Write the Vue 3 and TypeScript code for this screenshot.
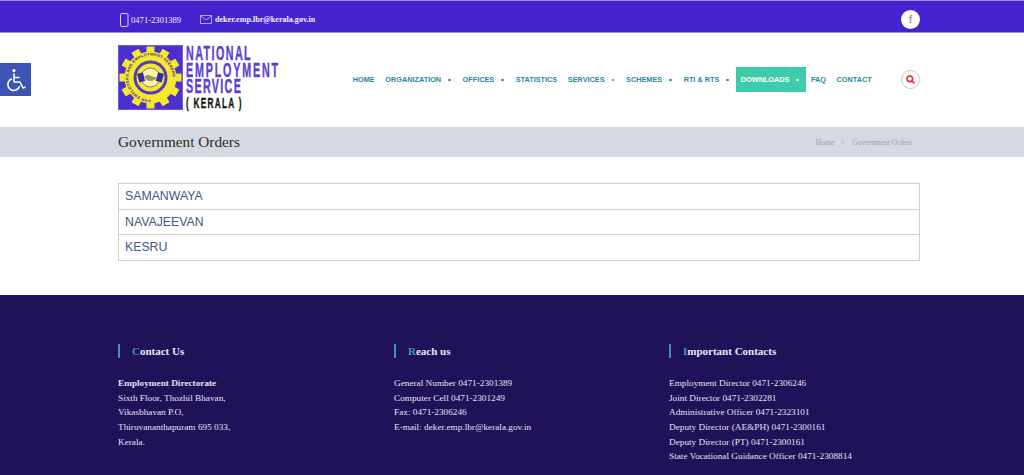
<script setup lang="ts">
interface NavItem {
  label: string
  caret?: boolean
  active?: boolean
}

const nav: NavItem[] = [
  { label: 'HOME' },
  { label: 'ORGANIZATION', caret: true },
  { label: 'OFFICES', caret: true },
  { label: 'STATISTICS' },
  { label: 'SERVICES', caret: true },
  { label: 'SCHEMES', caret: true },
  { label: 'RTI & RTS', caret: true },
  { label: 'DOWNLOADS', caret: true, active: true },
  { label: 'FAQ' },
  { label: 'CONTACT' },
]

const orders = ['SAMANWAYA', 'NAVAJEEVAN', 'KESRU']

const address = [
  'Sixth Floor, Thozhil Bhavan,',
  'Vikasbhavan P.O,',
  'Thiruvananthapuram 695 033,',
  'Kerala.',
]

const reach = [
  'General Number 0471-2301389',
  'Computer Cell 0471-2301249',
  'Fax: 0471-2306246',
  'E-mail: deker.emp.lbr@kerala.gov.in',
]

const important = [
  'Employment Director 0471-2306246',
  'Joint Director 0471-2302281',
  'Administrative Officer 0471-2323101',
  'Deputy Director (AE&PH) 0471-2300161',
  'Deputy Director (PT) 0471-2300161',
  'State Vocational Guidance Officer 0471-2308814',
]

const teeth = Array.from({ length: 12 }, (_, i) => i * 30)
</script>

<template>
  <div class="page">
    <div class="topbar">
      <div class="wrap topbar__in">
        <div class="topbar__contact">
          <svg class="ico-phone" width="10" height="14" viewBox="0 0 10 14" fill="none" stroke="#d9d4f5" stroke-width="1">
            <rect x="1.5" y="0.5" width="7.5" height="13" rx="1.2" />
          </svg>
          <span class="phone">0471-2301389</span>
          <svg class="ico-mail" width="12" height="9" viewBox="0 0 12 9" fill="none" stroke="#c9c2f0" stroke-width="0.8">
            <rect x="0.5" y="0.5" width="11" height="8" />
            <path d="M0.5 0.8 6 5l5.5-4.2" />
          </svg>
          <span class="mail">deker.emp.lbr@kerala.gov.in</span>
        </div>
        <div class="fb">f</div>
      </div>
    </div>

    <header class="header">
      <div class="wrap header__in">
        <div class="logo">
          <svg class="logo__mark" width="65" height="65" viewBox="0 0 65 65">
            <rect x="0.5" y="0.5" width="64" height="64" fill="#4b30cf" stroke="#6d5bd8" />
            <g fill="#f6e82c">
              <rect
                v-for="t in teeth"
                :key="t"
                x="28.5"
                y="1.5"
                width="8"
                height="9"
                :transform="`rotate(${t} 32.5 32.5)`"
              />
              <circle cx="32.5" cy="32.5" r="26" />
            </g>
            <circle cx="32.5" cy="32.5" r="17" fill="#4f3bc4" />
            <circle cx="32.5" cy="32.5" r="14" fill="#f6e82c" />
            <circle cx="32.5" cy="32.5" r="9.5" fill="#fbf6a0" stroke="#3a2a9a" stroke-width="0.6" />
            <rect x="20" y="28" width="6" height="9" fill="#3a2aa8" transform="rotate(-15 23 32)" />
            <rect x="39" y="28" width="6" height="9" fill="#3a2aa8" transform="rotate(15 42 32)" />
            <path d="M26 32c3-3 5-2 7-1s4 1 6 1c-2 3-4 4-7 4s-4-2-6-4Z" fill="#9c9a60" />
            <defs>
              <path id="ring" d="M32.5 54.5a22 22 0 1 1 .01 0" />
            </defs>
            <text class="logo__ring"><textPath href="#ring">FOR EMPLOYERS AND EMPLOYMENT SEEKERS</textPath></text>
          </svg>
          <div class="logo__text">
            <span class="logo__line logo__line--a">NATIONAL</span>
            <span class="logo__line logo__line--b">EMPLOYMENT</span>
            <span class="logo__line logo__line--c">SERVICE</span>
            <span class="logo__line logo__line--d">( KERALA )</span>
          </div>
        </div>

        <nav class="nav">
          <a
            v-for="item in nav"
            :key="item.label"
            class="nav__item"
            :class="{ 'nav__item--active': item.active }"
          >
            {{ item.label }}<i v-if="item.caret" class="nav__dot"></i>
          </a>
        </nav>

        <div class="search">
          <svg width="9" height="9" viewBox="0 0 9 9" fill="none" stroke="#d6333a" stroke-width="1.6">
            <circle cx="3.8" cy="3.8" r="2.8" />
            <path d="M5.9 5.9 8.4 8.4" />
          </svg>
        </div>
      </div>
    </header>

    <div class="crumbs">
      <div class="wrap crumbs__in">
        <h1 class="crumbs__title">Government Orders</h1>
        <div class="crumbs__path">
          <span>Home</span>
          <span class="crumbs__sep">&gt;</span>
          <span>Government Orders</span>
        </div>
      </div>
    </div>

    <main class="wrap content">
      <ul class="orders">
        <li v-for="o in orders" :key="o" class="orders__row">{{ o }}</li>
      </ul>
    </main>

    <footer class="footer">
      <div class="wrap footer__grid">
        <section>
          <h3 class="footer__head"><em>C</em>ontact Us</h3>
          <p class="footer__line footer__line--bold">Employment Directorate</p>
          <p v-for="l in address" :key="l" class="footer__line">{{ l }}</p>
        </section>
        <section>
          <h3 class="footer__head"><em>R</em>each us</h3>
          <p v-for="l in reach" :key="l" class="footer__line">{{ l }}</p>
        </section>
        <section>
          <h3 class="footer__head"><em>I</em>mportant Contacts</h3>
          <p v-for="l in important" :key="l" class="footer__line">{{ l }}</p>
        </section>
      </div>
    </footer>

    <button class="a11y" aria-label="Accessibility">
      <svg width="22" height="24" viewBox="0 0 22 24" fill="none" stroke="#fff" stroke-width="1.5" stroke-linecap="round" stroke-linejoin="round">
        <circle cx="9" cy="2.6" r="1.6" fill="#fff" stroke="none" />
        <path d="M9 6v8h6l3 6 2-.8" />
        <path d="M9 9.5h5" />
        <path d="M6.5 11a6 6 0 1 0 8 7.6" />
      </svg>
    </button>
  </div>
</template>

<style>
html,
body {
  margin: 0;
  background: #fff;
}
</style>

<style scoped>
.page {
  position: relative;
  width: 1024px;
  height: 475px;
  overflow: hidden;
  font-family: 'Liberation Serif', serif;
}

.wrap {
  width: 802px;
  margin-left: 118px;
}

.topbar {
  height: 33px;
  box-sizing: border-box;
  padding-top: 6px;
  background: #4324cf;
  border-top: 1px solid #9f8fe6;
  border-bottom: 1px solid #9f8fe6;
}

.topbar__in {
  height: 100%;
  display: flex;
  align-items: center;
  justify-content: space-between;
}

.topbar__contact {
  display: flex;
  align-items: center;
  color: #f1effb;
}

.ico-phone {
  margin: 0 2px 0 1px;
}

.phone {
  font-size: 8.6px;
  width: 69px;
}

.ico-mail {
  margin-right: 3px;
}

.mail {
  font-size: 8.1px;
  font-weight: 700;
}

.fb {
  width: 19px;
  height: 19px;
  border-radius: 50%;
  background: #fff;
  color: #9a9a9a;
  font: 700 10px/19px 'Liberation Sans', sans-serif;
  text-align: center;
}

.header {
  height: 94px;
}

.header__in {
  height: 100%;
  display: flex;
  align-items: center;
}

.logo {
  display: flex;
  width: 229.5px;
  height: 65px;
  margin-top: -5px;
  flex: none;
}

.logo__mark {
  flex: none;
}

.logo__ring {
  font: 700 4px 'Liberation Sans', sans-serif;
  fill: #3a2aa8;
  letter-spacing: 0.25px;
}

.logo__text {
  margin-left: 3px;
  display: flex;
  flex-direction: column;
}

.logo__line {
  display: block;
  height: 16.6px;
  font: 700 19.5px/16.6px 'Liberation Sans', sans-serif;
  color: #5a3fd0;
  white-space: nowrap;
  -webkit-text-stroke: 0.4px currentColor;
  transform: scaleX(0.55);
  transform-origin: left center;
}

.logo__line--a {
  letter-spacing: 2.6px;
}

.logo__line--b {
  letter-spacing: 3.3px;
}

.logo__line--c {
  letter-spacing: 2.4px;
}

.logo__line--d {
  font-size: 15px;
  color: #161616;
  letter-spacing: 2.3px;
}

.nav {
  display: flex;
  align-items: center;
  height: 25px;
  margin-top: -1px;
  flex: none;
}

.nav__item {
  display: flex;
  align-items: center;
  height: 25px;
  padding: 0 5.3px;
  font: 700 7.3px 'Liberation Sans', sans-serif;
  color: #1f8a9e;
  white-space: nowrap;
}

.nav__item--active {
  background: #3ecbaa;
  color: #fff;
}

.nav__dot {
  width: 2.4px;
  height: 2.4px;
  border-radius: 50%;
  background: currentColor;
  margin: 1px 1.5px 0 7px;
}

.search {
  width: 19px;
  height: 19px;
  box-sizing: border-box;
  margin-left: auto;
  margin-top: -1px;
  border: 1px solid #c9c9c9;
  border-radius: 50%;
  display: flex;
  align-items: center;
  justify-content: center;
}

.crumbs {
  height: 30px;
  background: #d5dae2;
}

.crumbs__in {
  height: 100%;
  display: flex;
  align-items: center;
  justify-content: space-between;
}

.crumbs__title {
  margin: 0;
  font-size: 15.3px;
  font-weight: 400;
  color: #2b2b2b;
}

.crumbs__path {
  display: flex;
  gap: 7px;
  margin-right: 8px;
  font-size: 7.5px;
  color: #9a9ea6;
}

.content {
  padding-top: 26px;
}

.orders {
  list-style: none;
  margin: 0;
  padding: 0;
  border: 1px solid #cfcfcf;
}

.orders__row {
  height: 24.7px;
  padding-left: 6px;
  font: 12.3px/25px 'Liberation Sans', sans-serif;
  color: #3b5a85;
}

.orders__row + .orders__row {
  border-top: 1px solid #cfcfcf;
}

.footer {
  position: absolute;
  left: 0;
  right: 0;
  top: 295px;
  bottom: 0;
  background: #1f1259;
}

.footer__grid {
  display: grid;
  grid-template-columns: 276px 275px 1fr;
  padding-top: 49px;
}

.footer__head {
  height: 14px;
  margin: 0 0 18px;
  padding-left: 12px;
  border-left: 2px solid #3f8fc0;
  font-size: 11px;
  line-height: 15px;
  font-weight: 700;
  color: #e8e6f4;
}

.footer__head em {
  font-style: normal;
  color: #3f8fc0;
}

.footer__line {
  margin: 0;
  font-size: 9.25px;
  line-height: 14.67px;
  color: #e4e0f2;
  white-space: nowrap;
}

.footer__line--bold {
  font-weight: 700;
}

.a11y {
  position: absolute;
  left: 0;
  top: 63px;
  width: 31px;
  height: 33px;
  padding: 0;
  border: 0;
  background: #3c55b4;
  display: flex;
  align-items: center;
  justify-content: center;
}
</style>
